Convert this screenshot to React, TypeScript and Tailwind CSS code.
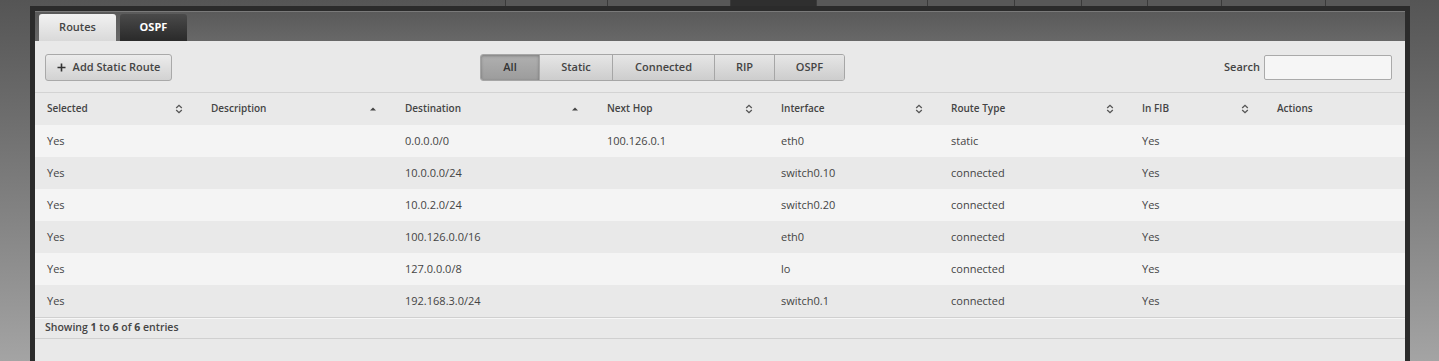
import React from "react";

const navWidths = [102, 123, 86, 111, 87, 67, 66, 74, 104, 85];

type Col = { label: string; width: number; sort: "both" | "asc" | "none" };

const columns: Col[] = [
  { label: "Selected", width: 164, sort: "both" },
  { label: "Description", width: 194, sort: "asc" },
  { label: "Destination", width: 202, sort: "asc" },
  { label: "Next Hop", width: 174, sort: "both" },
  { label: "Interface", width: 170, sort: "both" },
  { label: "Route Type", width: 191, sort: "both" },
  { label: "In FIB", width: 135, sort: "both" },
  { label: "Actions", width: 140, sort: "none" },
];

const rows = [
  ["Yes", "", "0.0.0.0/0", "100.126.0.1", "eth0", "static", "Yes", ""],
  ["Yes", "", "10.0.0.0/24", "", "switch0.10", "connected", "Yes", ""],
  ["Yes", "", "10.0.2.0/24", "", "switch0.20", "connected", "Yes", ""],
  ["Yes", "", "100.126.0.0/16", "", "eth0", "connected", "Yes", ""],
  ["Yes", "", "127.0.0.0/8", "", "lo", "connected", "Yes", ""],
  ["Yes", "", "192.168.3.0/24", "", "switch0.1", "connected", "Yes", ""],
];

const filters = [
  { label: "All", w: "w-[58px]" },
  { label: "Static", w: "w-[73px]" },
  { label: "Connected", w: "w-[102px]" },
  { label: "RIP", w: "w-[60px]" },
  { label: "OSPF", w: "w-[70px]" },
];

function SortIcon({ kind }: { kind: Col["sort"] }) {
  if (kind === "none") return null;
  if (kind === "asc") {
    return (
      <svg width="8" height="6" viewBox="0 0 8 6" className="mr-[16px]">
        <path d="M4 1.5 L7 4.5 L1 4.5 Z" fill="#444" />
      </svg>
    );
  }
  return (
    <svg width="8" height="10" viewBox="0 0 8 10" className="mr-[16px]">
      <path d="M1.2 4 L4 1.3 L6.8 4" fill="none" stroke="#555" strokeWidth="1.3" />
      <path d="M1.2 6 L4 8.7 L6.8 6" fill="none" stroke="#555" strokeWidth="1.3" />
    </svg>
  );
}

export default function App() {
  return (
    <div className="h-[361px] w-full overflow-hidden bg-gradient-to-b from-[#555555] to-[#a4a4a4] font-['Open_Sans',sans-serif] text-[11px] text-[#444]">
      {/* top navigation strip */}
      <div className="flex h-[6px] pl-[505px]">
        {navWidths.map((w, i) => (
          <div
            key={i}
            style={{ width: w }}
            className={
              i === 2
                ? "h-full border-l border-[#3a3a3a] bg-[#2f2f2f]"
                : "h-full border-l border-[#3a3a3a] bg-[#585858]"
            }
          />
        ))}
      </div>

      {/* panel */}
      <div className="ml-[30px] h-[355px] w-[1380px] bg-[#2b2b2b] px-[5px] pt-[5px]">
        <div className="flex h-[30px] items-end gap-[4px] border-t border-[#7a7a7a] bg-gradient-to-b from-[#5a5a5a] to-[#686868] pl-[4px]">
          <div className="flex h-[27px] w-[77px] items-center justify-center rounded-t-[3px] bg-gradient-to-b from-[#f2f2f2] to-[#d9d9d9] font-semibold text-[#444]">
            Routes
          </div>
          <div className="flex h-[27px] w-[67px] items-center justify-center rounded-t-[3px] bg-gradient-to-b from-[#4a4a4a] to-[#2a2a2a] font-bold text-white">
            OSPF
          </div>
        </div>

        <div className="h-[320px] bg-[#e9e9e9]">
          {/* toolbar */}
          <div className="flex h-[52px] items-center border-b border-[#d3d3d3] pl-[10px] pr-[13px] pt-[1px]">
            <button className="flex h-[27px] w-[127px] items-center justify-center gap-[7px] rounded-[3px] border border-[#a9a9a9] bg-gradient-to-b from-[#ececec] to-[#d2d2d2] text-[11px] font-semibold text-[#444]">
              <svg width="9" height="9" viewBox="0 0 9 9">
                <path d="M4.5 0.5 V8.5 M0.5 4.5 H8.5" stroke="#333" strokeWidth="1.6" />
              </svg>
              Add Static Route
            </button>

            <div className="ml-[308px] flex h-[27px] overflow-hidden rounded-[3px] border border-[#a6a6a6]">
              {filters.map((f, i) => (
                <div
                  key={f.label}
                  className={
                    i === 0
                      ? `${f.w} flex items-center justify-center bg-gradient-to-b from-[#b0b0b0] to-[#9c9c9c] font-semibold text-[#333] shadow-[inset_0_1px_3px_rgba(0,0,0,0.3)]`
                      : `${f.w} flex items-center justify-center border-l border-[#a6a6a6] bg-gradient-to-b from-[#e6e6e6] to-[#cdcdcd] font-semibold text-[#444]`
                  }
                >
                  {f.label}
                </div>
              ))}
            </div>

            <div className="ml-auto flex items-center gap-[4px]">
              <span className="font-semibold text-[#444]">Search</span>
              <input className="h-[25px] w-[128px] rounded-[2px] border border-[#aaa] bg-[#f6f6f6] outline-none" />
            </div>
          </div>

          {/* table */}
          <table className="w-full table-fixed border-collapse">
            <colgroup>
              {columns.map((c) => (
                <col key={c.label} style={{ width: c.width }} />
              ))}
            </colgroup>
            <thead>
              <tr className="h-[32px] bg-[#e9e9e9]">
                {columns.map((c) => (
                  <th key={c.label} className="p-0 pb-[1px] pl-[12px] text-left text-[10px] font-semibold text-[#444]">
                    <div className="flex items-center justify-between">
                      <span>{c.label}</span>
                      <SortIcon kind={c.sort} />
                    </div>
                  </th>
                ))}
              </tr>
            </thead>
            <tbody>
              {rows.map((r, i) => (
                <tr key={i} className={i % 2 === 0 ? "h-[32px] bg-[#f4f4f4]" : "h-[32px] bg-[#e9e9e9]"}>
                  {r.map((cell, j) => (
                    <td key={j} className="p-0 pl-[12px] text-[#444]">
                      {cell}
                    </td>
                  ))}
                </tr>
              ))}
            </tbody>
          </table>

          {/* footer */}
          <div className="flex h-[22px] items-center border-t border-b border-t-[#d0d0d0] border-b-[#d0d0d0] pl-[10px] text-[10.5px] font-semibold text-[#444] shadow-[inset_0_1px_0_#f7f7f7]">
            Showing&nbsp;<span className="font-bold">1</span>&nbsp;to&nbsp;<span className="font-bold">6</span>&nbsp;of&nbsp;
            <span className="font-bold">6</span>&nbsp;entries
          </div>
        </div>
      </div>
    </div>
  );
}
